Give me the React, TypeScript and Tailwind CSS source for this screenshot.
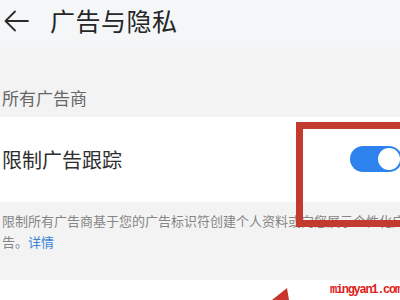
import React from "react";

const FONT = { fontFamily: '"Noto Sans CJK SC", "Noto Sans", sans-serif' };

export default function App() {
  return (
    <div className="relative w-[400px] h-[300px] overflow-hidden bg-[#f3f3f3]" style={FONT}>
      {/* Header */}
      <header className="h-[47px] bg-[#f5f6f8] flex items-center pb-[6px]">
        <svg className="ml-[4px]" width="25" height="22" viewBox="0 0 25 22" fill="none">
          <path d="M24 11H2M11 1.5L1.5 11L11 20.5" stroke="#2b2b2b" strokeWidth="1.8" strokeLinecap="round" strokeLinejoin="round" />
        </svg>
        <h1 className="ml-[21px] text-[25px] leading-none text-[#262626] tracking-[0.5px]">广告与隐私</h1>
      </header>

      {/* Section label */}
      <div className="h-[70px] flex items-center pl-[2px] pt-[30px]">
        <span className="text-[17px] leading-none text-[#666]">所有广告商</span>
      </div>

      {/* Card */}
      <div className="h-[85px] bg-white flex items-center justify-between pl-[2px]">
        <span className="text-[20px] leading-none text-[#2e2e2e] pt-[1px]">限制广告跟踪</span>
        <div className="w-[52px] h-[26px] rounded-full bg-[#2d82ee] flex items-center justify-end pr-[2px] -mr-[2px] -mt-[2px]">
          <div className="w-[22px] h-[22px] rounded-full bg-white" />
        </div>
      </div>

      {/* Description */}
      <div className="pt-[8px] pl-[2px] text-[13px] leading-[21px] text-[#858585] whitespace-nowrap">
        <div>限制所有广告商基于您的广告标识符创建个人资料或向您展示个性化广</div>
        <div>
          告。<span className="text-[#3b82d6]">详情</span>
        </div>
      </div>

      {/* Bottom white area */}
      <div className="absolute left-0 right-0 top-[280px] bottom-0 bg-white" />

      {/* Red annotation box */}
      <div className="absolute left-[296px] top-[122px] w-[120px] h-[105px] border-[7px] border-[#c33a2e]" />

      {/* Red arrow head */}
      <svg className="absolute left-[260px] top-[282px]" width="40" height="18" viewBox="0 0 40 18">
        <polygon points="27,6 12,18 29,18" fill="#c8352c" />
      </svg>

      {/* Watermark */}
      <span
        className="absolute left-[330px] top-[284px] text-[12px] leading-none text-[#e0201a] tracking-[-1.3px] font-bold"
        style={{ fontFamily: '"Liberation Mono", monospace' }}
      >
        mingyan1.com
      </span>
    </div>
  );
}
